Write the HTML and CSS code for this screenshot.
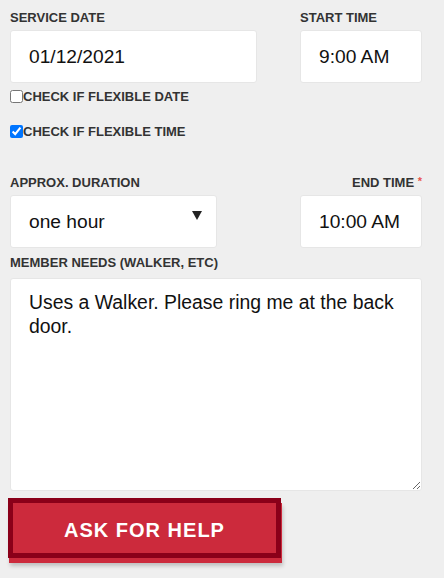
FILE: index.html
```html
<!DOCTYPE html>
<html lang="en">

<head>
    <meta charset="UTF-8">
    <meta name="viewport" content="width=device-width, initial-scale=1.0">
    <title>Ask For Help</title>
    <link rel="stylesheet" href="styles.css">
</head>

<body>
    <form class="help-form">
        <div class="row row-top">
            <div class="field">
                <label for="date">Service Date</label>
                <input class="input" type="text" id="date" value="01/12/2021">
            </div>
            <div class="field">
                <label for="start">Start Time</label>
                <input class="input" type="text" id="start" value="9:00 AM">
            </div>
        </div>

        <label class="check check-first">
            <input type="checkbox">
            <span>Check if flexible date</span>
        </label>
        <label class="check">
            <input type="checkbox" checked>
            <span>Check if flexible time</span>
        </label>

        <div class="row row-second">
            <div class="field">
                <label for="duration">Approx. Duration</label>
                <div class="select-wrap">
                    <select class="input" id="duration">
                        <option>one hour</option>
                        <option>two hours</option>
                        <option>half day</option>
                    </select>
                </div>
            </div>
            <div class="field field-right">
                <label for="end">End Time <span class="required">*</span></label>
                <input class="input" type="text" id="end" value="10:00 AM">
            </div>
        </div>

        <div class="field field-needs">
            <label for="needs">Member Needs (Walker, etc)</label>
            <textarea class="input notes" id="needs">Uses a Walker. Please ring me at the back door.</textarea>
        </div>

        <button type="button" class="help-button">Ask For Help</button>
    </form>
</body>

</html>
```

FILE: styles.css
```css
* {
    box-sizing: border-box;
    margin: 0;
    padding: 0;
}

body {
    background: #efefef;
    font-family: "Liberation Sans", Arial, sans-serif;
    color: #111;
}

.help-form {
    padding: 11px 22px 20px 10px;
}

.row {
    display: grid;
    justify-content: space-between;
}

.row-top {
    grid-template-columns: 247px 122px;
}

.row-second {
    grid-template-columns: 207px 122px;
    margin-top: 37px;
}

.field label {
    display: block;
    font-size: 13px;
    font-weight: bold;
    line-height: 14px;
    color: #333;
    text-transform: uppercase;
    margin-bottom: 5px;
}

.field-right label {
    text-align: right;
}

.required {
    position: relative;
    top: -2px;
    color: #e8554e;
    font-size: 11px;
    line-height: 0;
}

.input {
    display: block;
    width: 100%;
    height: 53px;
    border: 1px solid #e6e6e6;
    border-radius: 3px;
    background: #fff;
    padding: 0 18px;
    font-family: "Liberation Sans", Arial, sans-serif;
    font-size: 19.2px;
    color: #111;
    outline: none;
}

.select-wrap {
    position: relative;
}

.select-wrap select {
    appearance: none;
    -webkit-appearance: none;
}

.select-wrap::after {
    content: "";
    position: absolute;
    top: 16px;
    right: 15px;
    border-left: 5px solid transparent;
    border-right: 5px solid transparent;
    border-top: 9px solid #222;
    pointer-events: none;
}

.check {
    display: flex;
    align-items: center;
    font-size: 13px;
    font-weight: bold;
    line-height: 15px;
    color: #333;
    text-transform: uppercase;
    margin-top: 20px;
}

.check-first {
    margin-top: 6px;
}

.check input {
    width: 13px;
    height: 13px;
    margin: 0;
}

.field-needs {
    margin-top: 8px;
}

.field-needs label {
    margin-bottom: 8px;
}

.notes {
    height: 213px;
    padding: 11px 18px;
    font-size: 19.4px;
    line-height: 24px;
    resize: vertical;
}

.help-button {
    display: block;
    width: 273px;
    height: 60px;
    margin: 7px 0 0 -2px;
    padding-top: 4px;
    border: 5px solid #8a0019;
    background: #cc2a3c;
    color: #fff;
    font-family: "Liberation Sans", Arial, sans-serif;
    font-size: 20px;
    font-weight: bold;
    letter-spacing: 1px;
    text-transform: uppercase;
    cursor: pointer;
    box-shadow: 1px 5px 0 #cc2a3c, 2px 8px 4px rgba(0, 0, 0, 0.2);
}

.help-button:hover {
    background: #b8202f;
}
```
